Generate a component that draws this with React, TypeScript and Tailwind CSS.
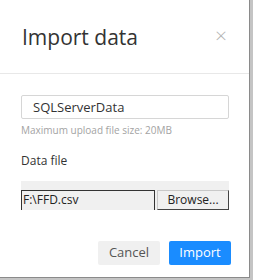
import React from 'react';

const font = { fontFamily: '"Open Sans", "Noto Sans", sans-serif' };

export default function App() {
  return (
    <div className="w-[253px] h-[280px] bg-[#c4c4c4] overflow-hidden" style={font}>
      <div className="w-[250px] h-[278px] bg-white border-r border-b border-[#8a8a8a] flex flex-col">
        {/* header */}
        <div className="h-[74px] border-b border-[#e8e8e8] flex items-center justify-between pl-[22px] pr-[22px] pt-[2px]">
          <h1 className="text-[21px] text-[#333] leading-none">Import data</h1>
          <button className="text-[#b3b3b3] text-[21px] leading-none font-light -mt-[5px]">×</button>
        </div>

        {/* body */}
        <div className="flex-1 px-[21px] pt-[20px]">
          <input
            defaultValue="SQLServerData"
            className="w-[208px] h-[24px] border border-[#d6d6d6] rounded-[2px] px-[11px] text-[13px] text-[#333] outline-none"
          />
          <p className="text-[10px] text-[#a3a3a3] mt-[4px] leading-[14px]">Maximum upload file size: 20MB</p>
          <p className="text-[12px] text-[#333] mt-[16px] leading-[16px]">Data file</p>

          <div className="w-[208px] mt-[12px] bg-[#f0f0f0] pt-[9px]">
            <div className="flex items-stretch gap-[2px] h-[20px]">
              <div className="w-[134px] border-t border-l border-r border-[#333] bg-[#f0f0f0] text-[12px] text-[#222] leading-[18px] pl-[1px]">
                F:\FFD.csv
              </div>
              <button className="flex-1 bg-[#f0f0f0] border border-[#c8c8c8] border-r-[#444] border-b-[#444] text-[12px] text-[#222] leading-[18px]">
                Browse...
              </button>
            </div>
          </div>
        </div>

        {/* footer */}
        <div className="h-[50px] bg-white flex items-start justify-end gap-[9px] pr-[18px] pt-[14px]">
          <button className="w-[62px] h-[24px] bg-[#f0f0f0] rounded-[2px] text-[13px] text-[#555]">Cancel</button>
          <button className="w-[62px] h-[24px] bg-[#1a8cff] rounded-[2px] text-[13px] text-white">Import</button>
        </div>
      </div>
    </div>
  );
}
